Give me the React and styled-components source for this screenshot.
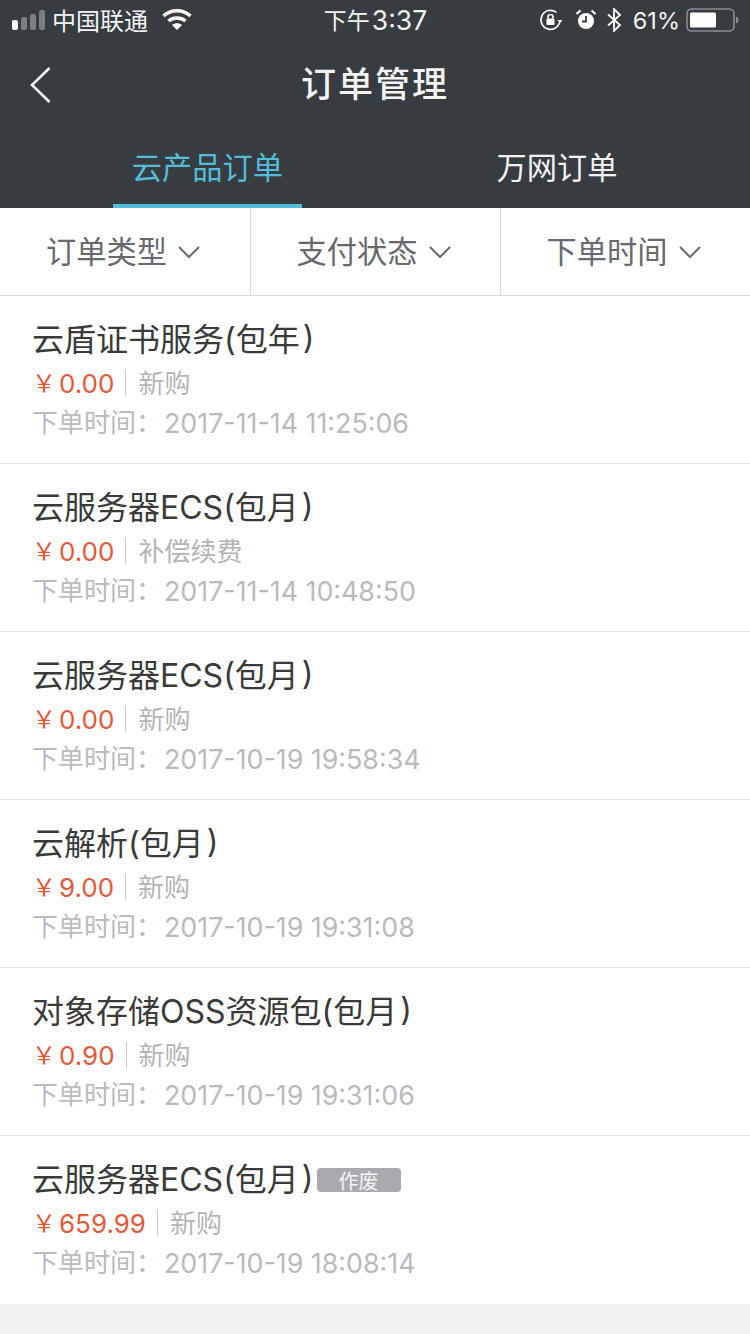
import React from 'react';
import styled, { createGlobalStyle } from 'styled-components';

const GlobalStyle = createGlobalStyle`
  html, body {
    margin: 0;
    padding: 0;
    background: #f0f0f0;
    font-family: Inter, 'Noto Sans CJK SC', sans-serif;
  }
`;

const Page = styled.div`
  width: 750px;
  height: 1334px;
  overflow: hidden;
  background: #f0f0f0;
`;

const Header = styled.header`
  height: 208px;
  background: #373c40;
  color: #fff;
`;

const StatusBar = styled.div`
  height: 40px;
  display: flex;
  align-items: center;
  justify-content: space-between;
  padding: 0 11px 0 12px;
  color: #f4f4f4;
`;

const StatusSide = styled.div`
  display: flex;
  align-items: center;
  width: 260px;
  justify-content: ${props => (props.$end ? 'flex-end' : 'flex-start')};
`;

const Carrier = styled.span`
  font-size: 24px;
  margin: 0 14px 2px 7px;
`;

const Clock = styled.div`
  display: flex;
  align-items: center;
  flex: none;
`;

const ClockPeriod = styled.span`
  font-size: 23px;
  margin: 0 2px 2px 0;
`;

const ClockTime = styled.span`
  font-size: 26.5px;
`;

const Percent = styled.span`
  font-size: 23.5px;
  margin: 0 6px 0 11px;
`;

const StatusIcon = styled.span`
  display: flex;
  margin-left: ${props => props.$gap || 0}px;
`;

const NavBar = styled.div`
  height: 86px;
  box-sizing: border-box;
  padding-bottom: 3px;
  display: flex;
  align-items: center;
  justify-content: center;
  position: relative;
`;

const BackButton = styled.div`
  position: absolute;
  left: 29px;
  top: 26px;
  line-height: 0;
`;

const Title = styled.h1`
  margin: 0;
  font-size: 35px;
  font-weight: 500;
  letter-spacing: 2px;
  color: #f4f4f4;
`;

const Tabs = styled.div`
  height: 82px;
  display: flex;
  padding-left: 113px;
  gap: 160px;
`;

const Tab = styled.div`
  width: ${props => props.$width}px;
  display: flex;
  align-items: center;
  justify-content: center;
  font-size: 30.25px;
  box-sizing: border-box;
  padding-top: 2px;
  color: ${props => (props.$active ? '#53bcd9' : '#f2f2f2')};
  border-bottom: 4px solid ${props => (props.$active ? '#53bcd9' : 'transparent')};
`;

const Filters = styled.div`
  height: 88px;
  box-sizing: border-box;
  display: grid;
  grid-template-columns: repeat(3, 250px);
  background: #fff;
  border-bottom: 1px solid #d9d9d9;
`;

const Filter = styled.div`
  display: flex;
  align-items: center;
  justify-content: center;
  gap: 10px;
  padding-right: 3px;
  color: #666a70;
  & + & {
    border-left: 1px solid #d9d9d9;
  }
`;

const FilterLabel = styled.span`
  font-size: 30.25px;
  margin-bottom: 4px;
`;

const OrderList = styled.div`
  background: #fff;
`;

const Row = styled.div`
  height: 168px;
  box-sizing: border-box;
  padding: 18px 0 0 32px;
  border-bottom: 1px solid #e2e2e2;
  &:last-child {
    border-bottom: none;
  }
`;

const RowTitle = styled.div`
  display: flex;
  align-items: center;
  height: 46px;
  font-size: 32px;
  color: #3a3a3a;
  white-space: pre;
`;

const ClosingParen = styled.span`
  margin-left: 3px;
`;

const Badge = styled.span`
  width: 84px;
  height: 24px;
  margin: 6px 0 0 3px;
  border-radius: 4px;
  background: #a9aab0;
  color: #f4f4f4;
  font-size: 20px;
  display: flex;
  align-items: center;
  justify-content: center;
`;

const Meta = styled.div`
  display: flex;
  align-items: center;
  height: 46px;
`;

const Price = styled.span`
  display: flex;
  align-items: center;
  color: #e4593a;
  padding-right: 11px;
  border-right: 1px solid #c8c8c8;
  height: 26px;
`;

const Yen = styled.span`
  font-size: 24px;
  margin: 0 3px 4px 0;
`;

const Amount = styled.span`
  font-size: 26px;
`;

const Kind = styled.span`
  font-size: 26px;
  color: #b3b4b8;
  margin: 0 0 4px 12px;
`;

const Time = styled.div`
  height: 34px;
  display: flex;
  align-items: center;
  color: #b9bac0;
`;

const TimeLabel = styled.span`
  font-size: 26px;
  margin: 0 2px 5px 0;
`;

const TimeValue = styled.span`
  font-size: 26.8px;
`;

const orders = [
  { name: '云盾证书服务(包年', price: '0.00', kind: '新购', time: '2017-11-14 11:25:06' },
  { name: '云服务器ECS(包月', price: '0.00', kind: '补偿续费', time: '2017-11-14 10:48:50' },
  { name: '云服务器ECS(包月', price: '0.00', kind: '新购', time: '2017-10-19 19:58:34' },
  { name: '云解析(包月', price: '9.00', kind: '新购', time: '2017-10-19 19:31:08' },
  { name: '对象存储OSS资源包(包月', price: '0.90', kind: '新购', time: '2017-10-19 19:31:06' },
  { name: '云服务器ECS(包月', price: '659.99', kind: '新购', time: '2017-10-19 18:08:14', void: true },
];

function Signal() {
  return (
    <svg width="33" height="22" viewBox="0 0 33 22">
      <rect x="0" y="11" width="6" height="10" rx="2" fill="#fff" />
      <rect x="9" y="8" width="6" height="13" rx="2" fill="#7c7f81" />
      <rect x="18" y="5" width="6" height="16" rx="2" fill="#7c7f81" />
      <rect x="27" y="1" width="6" height="20" rx="2" fill="#7c7f81" />
    </svg>
  );
}

function Wifi() {
  return (
    <svg width="30" height="22" viewBox="0 0 30 22" fill="none" stroke="#fff" strokeWidth="3.4">
      <path d="M1.5 7 C9 0 21 0 28.5 7" />
      <path d="M6.5 12 C11 8 19 8 23.5 12" />
      <path d="M15 21 L10 16 C13 13.5 17 13.5 20 16 Z" fill="#fff" stroke="none" />
    </svg>
  );
}

function RotationLock() {
  return (
    <svg width="24" height="24" viewBox="0 0 24 24" fill="none" stroke="#fff" strokeWidth="1.6">
      <path d="M21 12 A9.5 9.5 0 1 1 17.5 4.5" />
      <path d="M18.5 12 L23.5 12 L21 15 Z" fill="#fff" stroke="none" />
      <rect x="7.5" y="10.5" width="8" height="6.5" rx="1" fill="#fff" stroke="none" />
      <path d="M9 10.5 V9 A2.5 2.5 0 0 1 14 9 V10.5" />
    </svg>
  );
}

function Alarm() {
  return (
    <svg width="20" height="22" viewBox="0 0 20 22">
      <circle cx="10" cy="12" r="8" fill="#fff" />
      <path d="M10 7 V12.5 H6" fill="none" stroke="#373c40" strokeWidth="1.8" />
      <path d="M0.5 5 L4.5 1.5 M19.5 5 L15.5 1.5" stroke="#fff" strokeWidth="2.2" />
    </svg>
  );
}

function Bluetooth() {
  return (
    <svg width="16" height="24" viewBox="0 0 16 24" fill="none" stroke="#fff" strokeWidth="1.8">
      <path d="M2 6.5 L14 17 L8 23 V1 L14 7 L2 17.5" />
    </svg>
  );
}

function Battery() {
  return (
    <svg width="53" height="24" viewBox="0 0 53 24">
      <rect x="1" y="1" width="47" height="22" rx="4.5" fill="none" stroke="#8a8d8f" strokeWidth="1.6" />
      <rect x="4" y="4.5" width="26" height="15" rx="1.5" fill="#fff" />
      <path d="M50 8.5 C52 9.5 52.5 10.5 52.5 12 C52.5 13.5 52 14.5 50 15.5 Z" fill="#8a8d8f" />
    </svg>
  );
}

function BackArrow() {
  return (
    <svg width="24" height="38" viewBox="0 0 24 38" fill="none" stroke="#f4f4f4" strokeWidth="2.6">
      <path d="M20.5 2 L3 19 L20.5 36" />
    </svg>
  );
}

function Chevron() {
  return (
    <svg width="24" height="14" viewBox="0 0 24 14" fill="none" stroke="#666a70" strokeWidth="2">
      <path d="M2 2 L12 12 L22 2" />
    </svg>
  );
}

export default function App() {
  return (
    <Page>
      <GlobalStyle />
      <Header>
        <StatusBar>
          <StatusSide>
            <Signal />
            <Carrier>中国联通</Carrier>
            <Wifi />
          </StatusSide>
          <Clock>
            <ClockPeriod>下午</ClockPeriod>
            <ClockTime>3:37</ClockTime>
          </Clock>
          <StatusSide $end>
            <StatusIcon><RotationLock /></StatusIcon>
            <StatusIcon $gap={13}><Alarm /></StatusIcon>
            <StatusIcon $gap={10}><Bluetooth /></StatusIcon>
            <Percent>61%</Percent>
            <StatusIcon><Battery /></StatusIcon>
          </StatusSide>
        </StatusBar>
        <NavBar>
          <BackButton>
            <BackArrow />
          </BackButton>
          <Title>订单管理</Title>
        </NavBar>
        <Tabs>
          <Tab $active $width={189}>云产品订单</Tab>
          <Tab $width={190}>万网订单</Tab>
        </Tabs>
      </Header>
      <Filters>
        {['订单类型', '支付状态', '下单时间'].map(label => (
          <Filter key={label}>
            <FilterLabel>{label}</FilterLabel>
            <Chevron />
          </Filter>
        ))}
      </Filters>
      <OrderList>
        {orders.map(order => (
          <Row key={order.time}>
            <RowTitle>
              {order.name}
              <ClosingParen>)</ClosingParen>
              {order.void && <Badge>作废</Badge>}
            </RowTitle>
            <Meta>
              <Price>
                <Yen>￥</Yen>
                <Amount>{order.price}</Amount>
              </Price>
              <Kind>{order.kind}</Kind>
            </Meta>
            <Time>
              <TimeLabel>下单时间：</TimeLabel>
              <TimeValue>{order.time}</TimeValue>
            </Time>
          </Row>
        ))}
      </OrderList>
    </Page>
  );
}
